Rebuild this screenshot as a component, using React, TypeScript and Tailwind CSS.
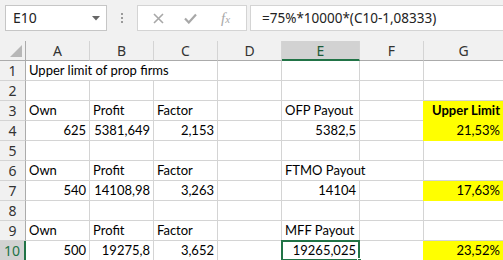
import React from "react";

// --- Types ---
interface Cell {
  v?: string;
  right?: boolean;
  bold?: boolean;
  fill?: boolean;
  spill?: boolean; // text runs into next cell, hide right gridline
}

const COLS = ["A", "B", "C", "D", "E", "F", "G"];
const COL_W = ["w-[64px]", "w-[64px]", "w-[64px]", "w-[64px]", "w-[78px]", "w-[64px]", "w-[80px]"];

const ROWS: Cell[][] = [
  [{ v: "Upper limit of prop firms", spill: true }, { spill: true }, {}, {}, {}, {}, {}],
  [{}, {}, {}, {}, {}, {}, {}],
  [{ v: "Own" }, { v: "Profit" }, { v: "Factor" }, {}, { v: "OFP Payout" }, {}, { v: "Upper Limit", right: true, bold: true, fill: true }],
  [{ v: "625", right: true }, { v: "5381,649", right: true }, { v: "2,153", right: true }, {}, { v: "5382,5", right: true }, {}, { v: "21,53%", right: true, fill: true }],
  [{}, {}, {}, {}, {}, {}, {}],
  [{ v: "Own" }, { v: "Profit" }, { v: "Factor" }, {}, { v: "FTMO Payout", spill: true }, {}, {}],
  [{ v: "540", right: true }, { v: "14108,98", right: true }, { v: "3,263", right: true }, {}, { v: "14104", right: true }, {}, { v: "17,63%", right: true, fill: true }],
  [{}, {}, {}, {}, {}, {}, {}],
  [{ v: "Own" }, { v: "Profit" }, { v: "Factor" }, {}, { v: "MFF Payout" }, {}, {}],
  [{ v: "500", right: true }, { v: "19275,8", right: true }, { v: "3,652", right: true }, {}, { v: "19265,025", right: true }, {}, { v: "23,52%", right: true, fill: true }],
];

const cellFont = "font-['Lato','Liberation_Sans',sans-serif] text-[13px] text-black";
const uiFont = "font-['Noto_Sans','Open_Sans',sans-serif]";

function FormulaBar() {
  return (
    <div className="h-[41px] bg-[#f1f1f1] flex items-start pt-[5px] pl-[5px] shrink-0">
      {/* name box */}
      <div className={`w-[102px] h-[26px] shrink-0 bg-white border border-[#c6c6c6] flex items-center pl-[7px] pr-[6px] ${uiFont} text-[14px] text-[#222]`}>
        <span className="flex-1 leading-none">E10</span>
        <svg width="8" height="5" viewBox="0 0 8 5">
          <polygon points="0,0 8,0 4,4.5" fill="#666" />
        </svg>
      </div>
      <div className="w-[30px] h-[26px] shrink-0 flex flex-col items-center justify-center gap-[2px]">
        <span className="w-[2px] h-[2px] bg-[#9a9a9a]" />
        <span className="w-[2px] h-[2px] bg-[#9a9a9a]" />
        <span className="w-[2px] h-[2px] bg-[#9a9a9a]" />
      </div>
      {/* cancel / enter / fx */}
      <div className="w-[110px] h-[26px] shrink-0 bg-white border border-[#d4d4d4] flex items-center">
        <div className="w-[40px] shrink-0 flex justify-center">
          <svg width="11" height="11" viewBox="0 0 11 11">
            <path d="M1 1 L10 10 M10 1 L1 10" stroke="#a8a8a8" strokeWidth="1.6" />
          </svg>
        </div>
        <div className="w-[24px] shrink-0 flex justify-center">
          <svg width="13" height="11" viewBox="0 0 13 11">
            <path d="M1 5.5 L4.8 9.5 L12 1.5" stroke="#a8a8a8" strokeWidth="2.2" fill="none" />
          </svg>
        </div>
        <div className="flex-1 flex justify-start pl-[19px]">
          <span className="font-['Liberation_Serif',serif] italic text-[15px] text-[#a8a8a8] leading-none">
            f<span className="text-[11px]">x</span>
          </span>
        </div>
      </div>
      <div className={`ml-[3px] w-[270px] h-[26px] shrink-0 bg-white border border-[#d4d4d4] flex items-center pl-[11px] ${uiFont} text-[13.5px] text-[#222]`}>
        =75%*10000*(C10-1,08333)
      </div>
    </div>
  );
}

function HeaderRow() {
  return (
    <div className="flex h-[20px] shrink-0 bg-[#f1f1f1]">
      <div className="w-[26px] h-[20px] shrink-0 border-r border-b border-[#ababab] relative">
        <svg className="absolute right-[3px] bottom-[3px]" width="12" height="12" viewBox="0 0 12 12">
          <polygon points="12,0 12,12 0,12" fill="#b7b7b7" />
        </svg>
      </div>
      {COLS.map((c, i) => {
        const sel = c === "E";
        return (
          <div
            key={c}
            className={`${COL_W[i]} h-[20px] shrink-0 flex items-center justify-center ${uiFont} text-[14px] border-r border-[#d4d4d4] ${
              sel ? "bg-[#d2d2d2] border-b-2 border-b-[#217346] text-[#1e5b3a] pt-[1px]" : "border-b border-b-[#ababab] text-[#333]"
            }`}
          >
            {c}
          </div>
        );
      })}
    </div>
  );
}

export default function App() {
  return (
    <div className="w-[503px] h-[260px] overflow-hidden bg-white flex flex-col">
      <FormulaBar />
      <HeaderRow />
      {ROWS.map((row, r) => {
        const rowSel = r === 9;
        return (
          <div key={r} className="flex h-[20px] shrink-0">
            <div
              className={`w-[26px] h-[20px] shrink-0 flex items-center justify-center ${uiFont} text-[14px] border-b border-b-[#d4d4d4] ${
                rowSel ? "bg-[#d2d2d2] text-[#217346] border-r-2 border-r-[#217346]" : "bg-[#f1f1f1] text-[#333] border-r border-r-[#ababab]"
              }`}
            >
              {r + 1}
            </div>
            {row.map((cell, c) => {
              const selected = rowSel && c === 4;
              return (
                <div
                  key={c}
                  className={`${COL_W[c]} h-[20px] shrink-0 relative flex items-end pb-[1px] px-[3px] whitespace-nowrap ${cellFont} leading-[18px] ${
                    cell.right ? "justify-end" : "justify-start"
                  } ${cell.fill ? "bg-[#ffff00] shadow-[-1px_0_0_#ffff00] border-b border-b-[#ffff00]" : "border-b border-b-[#d4d4d4]"} ${
                    cell.spill ? "" : cell.fill ? "border-r border-r-[#ffff00]" : "border-r border-r-[#d4d4d4]"
                  } ${cell.bold ? "font-bold" : ""} ${cell.spill ? "z-10" : ""}`}
                >
                  {cell.v}
                  {selected && (
                    <div className="absolute -left-[1px] -top-[1px] w-[79px] h-[21px] border-2 border-[#217346] pointer-events-none">
                      <div className="absolute -right-[4px] -bottom-[4px] w-[5px] h-[5px] bg-[#217346] border border-white" />
                    </div>
                  )}
                </div>
              );
            })}
          </div>
        );
      })}
    </div>
  );
}
